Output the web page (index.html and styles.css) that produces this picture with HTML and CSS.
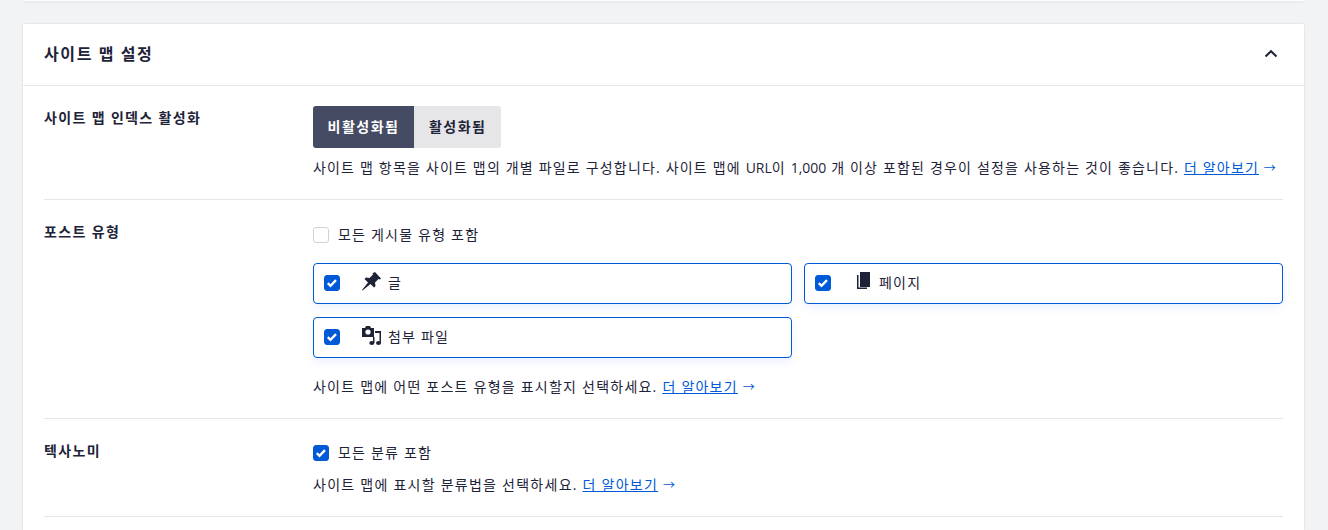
FILE: index.html
```html
<!DOCTYPE html>
<html lang="ko">
<head>
<meta charset="utf-8">
<title>사이트 맵 설정</title>
<link rel="stylesheet" href="styles.css">
</head>
<body>
<div class="page">
  <div class="card-stub"></div>
  <section class="card">
    <header class="card-head">
      <h2 class="card-title">사이트 맵 설정</h2>
      <svg class="chevron" width="24" height="24" viewBox="0 0 24 24"><path d="M6.500 14.500 12 9.200l5.500 5.300" fill="none" stroke="#1e2338" stroke-width="2"/></svg>
    </header>
    <div class="card-body">
      <div class="row row-index">
        <div class="row-label">사이트 맵 인덱스 활성화</div>
        <div class="row-main">
          <div class="toggle">
            <span class="toggle-btn is-active">비활성화됨</span>
            <span class="toggle-btn">활성화됨</span>
          </div>
          <p class="help help-index">사이트 맵 항목을 사이트 맵의 개별 파일로 구성합니다. 사이트 맵에 <span class="latin">URL</span>이 <span class="latin">1,000</span> 개 이상 포함된 경우이 설정을 사용하는 것이 좋습니다. <a class="more" href="#">더 알아보기</a> <span class="arrow">→</span></p>
        </div>
      </div>
      <div class="row row-types">
        <div class="row-label">포스트 유형</div>
        <div class="row-main">
          <label class="check-line">
            <span class="box"></span>
            <span>모든 게시물 유형 포함</span>
          </label>
          <div class="tiles">
            <div class="tile">
              <span class="box is-checked"><svg width="12" height="10" viewBox="0 0 12 10"><path d="M1.800 5.200 4.500 7.800 10 2.200" fill="none" stroke="#fff" stroke-width="2.400"/></svg></span>
              <svg class="tile-icon" width="20" height="20" viewBox="0 0 20 20"><path fill="#1e2338" d="M14 0l6 6.500-1 1-1.500-.5-3.500 3.500.5 3.500-1.500 1.500-3.500-3.500L1.500 18.500 1 18l6-7.500-3.500-3.500L5 5.500l3.500.5L12 2.500l-.5-1.200z"/></svg>
              <span class="tile-text">글</span>
            </div>
            <div class="tile">
              <span class="box is-checked"><svg width="12" height="10" viewBox="0 0 12 10"><path d="M1.800 5.200 4.500 7.800 10 2.200" fill="none" stroke="#fff" stroke-width="2.400"/></svg></span>
              <svg class="tile-icon" width="20" height="20" viewBox="0 0 20 20"><path fill="#1e2338" d="M8 0h10v15H8z"/><path fill="#1e2338" d="M5 3h1.500v12.500H15V17H5z"/></svg>
              <span class="tile-text">페이지</span>
            </div>
            <div class="tile">
              <span class="box is-checked"><svg width="12" height="10" viewBox="0 0 12 10"><path d="M1.800 5.200 4.500 7.800 10 2.200" fill="none" stroke="#fff" stroke-width="2.400"/></svg></span>
              <svg class="tile-icon" width="20" height="20" viewBox="0 0 20 20"><path fill="#1e2338" fill-rule="evenodd" d="M4 2l1-2h4l1 2h3v9H1V2zM7 3.400a2.600 2.600 0 1 0 0 5.200 2.600 2.600 0 0 0 0-5.200z"/><path fill="#1e2338" d="M12 11h1.500v6h-1.500z"/><ellipse fill="#1e2338" cx="10.800" cy="17" rx="2.500" ry="2"/><path fill="#1e2338" d="M14 5h6v12h-1.500V7H14z"/><ellipse fill="#1e2338" cx="17.500" cy="17" rx="2.500" ry="2"/></svg>
              <span class="tile-text">첨부 파일</span>
            </div>
          </div>
          <p class="help help-types">사이트 맵에 어떤 포스트 유형을 표시할지 선택하세요. <a class="more" href="#">더 알아보기</a> <span class="arrow">→</span></p>
        </div>
      </div>
      <div class="row row-tax">
        <div class="row-label">텍사노미</div>
        <div class="row-main">
          <label class="check-line">
            <span class="box is-checked"><svg width="12" height="10" viewBox="0 0 12 10"><path d="M1.800 5.200 4.500 7.800 10 2.200" fill="none" stroke="#fff" stroke-width="2.400"/></svg></span>
            <span>모든 분류 포함</span>
          </label>
          <p class="help help-tax">사이트 맵에 표시할 분류법을 선택하세요. <a class="more" href="#">더 알아보기</a> <span class="arrow">→</span></p>
        </div>
      </div>
    </div>
  </section>
</div>
</body>
</html>
```
FILE: styles.css
```css
* { box-sizing: border-box; }
html, body { margin: 0; height: 530px; overflow: hidden; }
body {
  background: #f2f3f5;
  color: #1e2338;
  font-family: "Open Sans", "Noto Sans CJK KR", sans-serif;
  font-size: 14px;
  line-height: 20px;
  letter-spacing: 1.2px;
}
.page { height: 530px; overflow: hidden; padding: 0 24px 0 23px; }
.card-stub {
  height: 1px;
  background: #fff;
  box-shadow: 0 1px 3px rgba(0, 0, 0, .12);
}
.card {
  margin-top: 23px;
  background: #fff;
  box-shadow: 0 0 2px rgba(0, 0, 0, .14);
}
.card-head {
  height: 62px;
  padding: 0 22px 2px 21px;
  display: flex;
  align-items: center;
  justify-content: space-between;
  border-bottom: 1px solid #e6e6e8;
}
.card-title { margin: 0; font-size: 16px; font-weight: 700; line-height: 24px; letter-spacing: 1.6px; }
.chevron { display: block; margin-right: -1px; }
.card-body { padding: 0 21px 13px; }
.row {
  display: flex;
  border-bottom: 1px solid #e6e6e8;
}
.row-index { height: 114px; padding-top: 20px; }
.row-types { height: 219px; padding-top: 20px; }
.row-tax { height: 98px; padding-top: 22px; }
.row-label { width: 269px; flex: none; font-weight: 700; padding-top: 2px; letter-spacing: 1.35px; }
.row-tax .row-label { padding-top: 0; }
.row-main { flex: 1; min-width: 0; }
.row-tax .row-main { padding-top: 2px; }
.toggle { display: flex; }
.toggle-btn {
  height: 42px;
  padding: 0 15px;
  display: flex;
  align-items: center;
  background: #e6e6e8;
  font-weight: 700;
  letter-spacing: 1.5px;
}
.toggle-btn:first-child { padding: 0 14.500px; border-radius: 3px 0 0 3px; }
.toggle-btn:last-child { border-radius: 0 3px 3px 0; }
.toggle-btn.is-active { background: #454b63; color: #fff; }
.help { margin: 0; }
.latin { letter-spacing: 0; }
.help-index { margin-top: 10px; letter-spacing: 1.18px; white-space: nowrap; }
.help-types { margin-top: 19px; letter-spacing: 1.23px; }
.help-tax { margin-top: 12px; letter-spacing: 1.25px; }
.more { color: #0059d6; text-decoration: underline; }
.arrow { color: #0059d6; font-size: 12px; }
.check-line { display: flex; align-items: center; gap: 9px; height: 20px; }
.row-types .check-line { margin-top: 5px; }
.box {
  width: 16px;
  height: 16px;
  flex: none;
  display: flex;
  align-items: center;
  justify-content: center;
  background: #fff;
  border: 1px solid #d3d3d6;
  border-radius: 3px;
}
.box.is-checked { background: #0059d6; border-color: #0059d6; }
.tiles {
  margin-top: 18px;
  display: grid;
  grid-template-columns: 1fr 1fr;
  gap: 13px 12px;
}
.tile {
  height: 41px;
  padding: 0 10px 3px;
  display: flex;
  align-items: center;
  border: 1px solid #0059d6;
  border-radius: 4px;
  box-shadow: 0 4px 8px rgba(0, 89, 214, .08);
}
.tile .box { margin-top: 2px; }
.tile-icon { margin-left: 21px; margin-right: 7px; flex: none; }
.tile-text { padding-top: 1px; }
```
